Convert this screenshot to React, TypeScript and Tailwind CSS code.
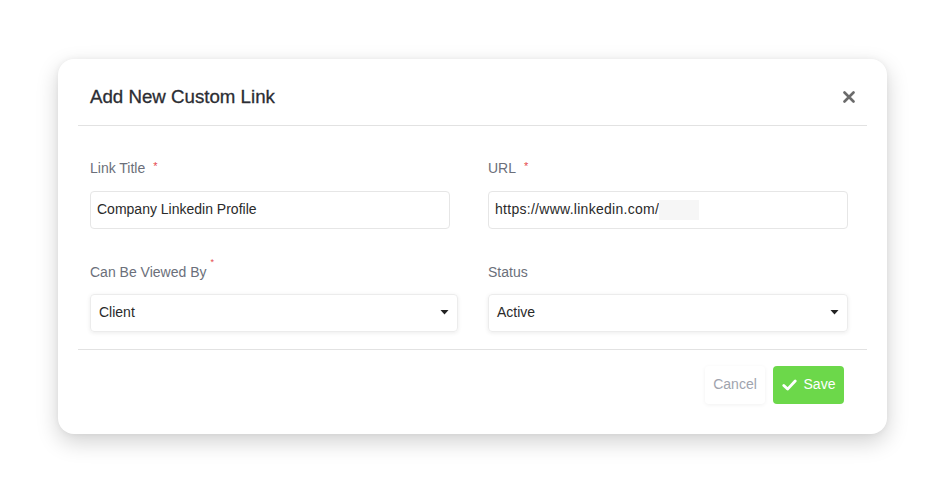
import React from "react";

const font = { fontFamily: '"Liberation Sans", Arial, sans-serif' };

function Caret() {
  return (
    <svg width="9" height="5" viewBox="0 0 9 5" className="shrink-0">
      <path d="M0.5 0h8L4.5 4.6z" fill="#222" />
    </svg>
  );
}

function CloseIcon() {
  return (
    <svg width="12" height="12" viewBox="0 0 12 12">
      <path d="M1.5 1.5l9 9M10.5 1.5l-9 9" stroke="#6b6b6b" strokeWidth="2.6" strokeLinecap="round" />
    </svg>
  );
}

function CheckIcon() {
  return (
    <svg width="15" height="12" viewBox="0 0 15 12">
      <path d="M1.8 6.4l3.8 3.7L13.2 2" stroke="#fff" strokeWidth="2.8" fill="none" strokeLinecap="round" strokeLinejoin="round" />
    </svg>
  );
}

export default function App() {
  return (
    <div className="w-[945px] h-[492px] bg-white flex items-center justify-center" style={font}>
      <div className="w-[829px] h-[375px] bg-white rounded-[16px] shadow-[0_8px_22px_rgba(0,0,0,0.18),0_0_6px_rgba(0,0,0,0.05)] px-5 flex flex-col">
        {/* Header */}
        <div className="flex items-center justify-between pl-3 pr-[12px] pt-[24px] pb-[14px] border-b border-[#e2e2e2]">
          <h2 className="text-[18.7px] leading-[28px] text-[#2b2d33] [-webkit-text-stroke:0.3px_#2b2d33]">Add New Custom Link</h2>
          <button className="w-3 h-4 flex items-center justify-center" aria-label="Close">
            <CloseIcon />
          </button>
        </div>

        {/* Body */}
        <div className="px-3 pt-[32px] pb-[17px] border-b border-[#e2e2e2] grid grid-cols-[368px_368px] gap-x-[30px]">
          <div className="flex flex-col">
            <label className="text-[14px] leading-[20px] text-[#6b6f7a] flex items-start">
              Link Title
              <span className="text-[#e5484d] text-[11px] leading-[14px] ml-[8px] mt-[1px]">*</span>
            </label>
            <div className="mt-[13px] w-[360px] h-[38px] border border-[#e6e6e6] rounded-[4px] px-[6px] flex items-center text-[14px] text-[#2a2a2a]">
              Company Linkedin Profile
            </div>
          </div>
          <div className="flex flex-col">
            <label className="text-[14px] leading-[20px] text-[#6b6f7a] flex items-start">
              URL
              <span className="text-[#e5484d] text-[11px] leading-[14px] ml-[8px] mt-[1px]">*</span>
            </label>
            <div className="mt-[13px] w-[360px] h-[38px] border border-[#e6e6e6] rounded-[4px] px-[6px] flex items-center text-[14px] text-[#2a2a2a]">
              <span className="tracking-[0.28px]">https://www.linkedin.com/</span>
              <span className="inline-block w-[40px] h-[20px] bg-[#f6f6f6]" />
            </div>
          </div>

          <div className="flex flex-col mt-[33px]">
            <label className="text-[14px] leading-[20px] text-[#6b6f7a] flex items-start">
              Can Be Viewed By
              <span className="text-[#e5484d] text-[9px] leading-[10px] ml-[4px] -mt-[5px]">*</span>
            </label>
            <div className="mt-[12px] w-full h-[38px] border border-[#ececec] rounded-[4px] shadow-[0_1px_4px_rgba(0,0,0,0.08)] pl-[8px] pr-[8px] flex items-center justify-between text-[14px] text-[#2a2a2a]">
              <span>Client</span>
              <Caret />
            </div>
          </div>
          <div className="flex flex-col mt-[33px]">
            <label className="text-[14px] leading-[20px] text-[#6b6f7a]">Status</label>
            <div className="mt-[12px] w-[360px] h-[38px] border border-[#ececec] rounded-[4px] shadow-[0_1px_4px_rgba(0,0,0,0.08)] pl-[8px] pr-[8px] flex items-center justify-between text-[14px] text-[#2a2a2a]">
              <span>Active</span>
              <Caret />
            </div>
          </div>
        </div>

        {/* Footer */}
        <div className="flex items-center justify-end gap-2 px-[23px] pt-[16px]">
          <button className="h-[38px] w-[60px] rounded-[4px] bg-white shadow-[0_1px_4px_rgba(0,0,0,0.06)] text-[14px] text-[#a0a4ae]">
            Cancel
          </button>
          <button className="h-[38px] w-[71px] rounded-[4px] bg-[#6cd84a] flex items-center justify-center gap-[7px] text-[14px] text-white">
            <CheckIcon />
            Save
          </button>
        </div>
      </div>
    </div>
  );
}
